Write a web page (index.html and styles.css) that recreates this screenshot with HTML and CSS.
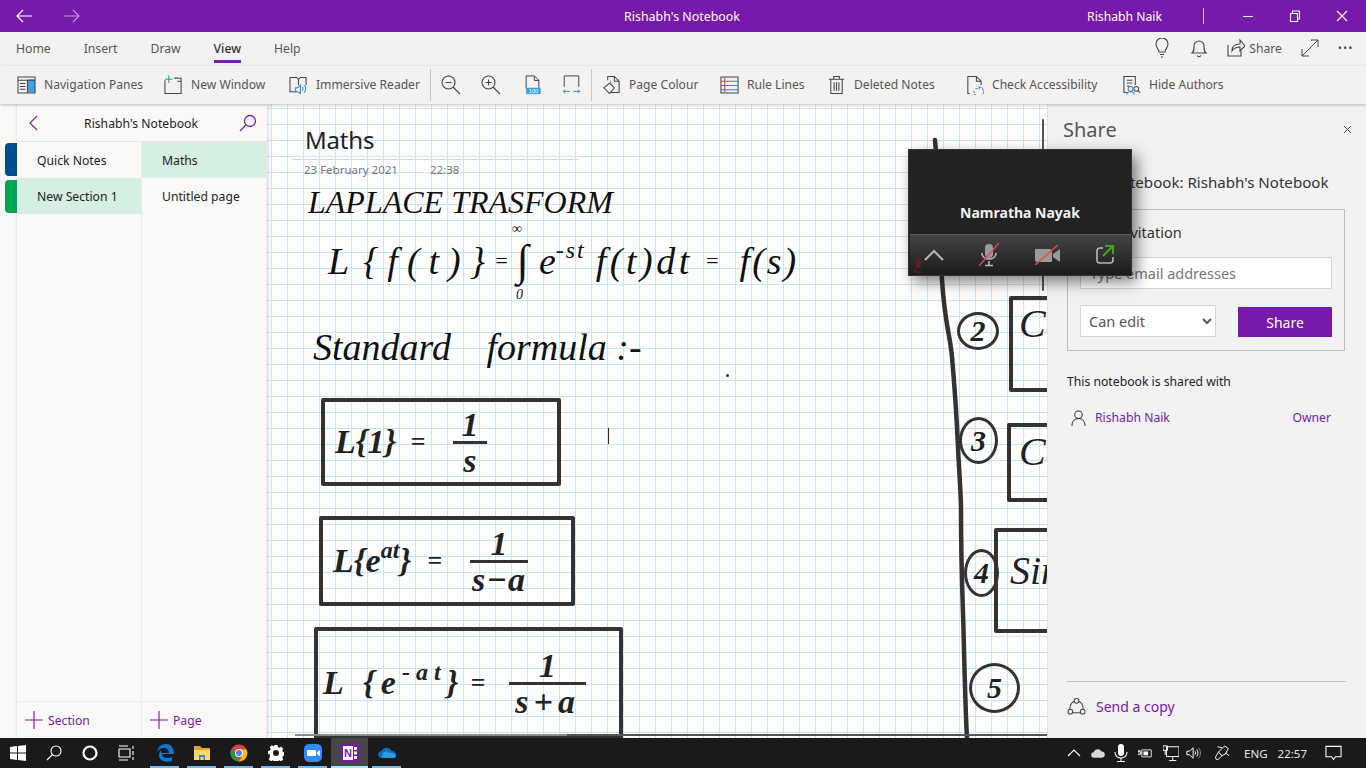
FILE: index.html
```html
<!DOCTYPE html>
<html lang="en">
<head>
<meta charset="utf-8">
<title>Rishabh's Notebook - OneNote</title>
<link rel="stylesheet" href="styles.css">
</head>
<body>
<div class="app">
  <header class="titlebar">
    <div class="tb-nav">
      <svg class="tb-arrow" viewBox="0 0 16 14"><path d="M16 7H1M7 1 1 7l6 6"/></svg>
      <svg class="tb-arrow faded" viewBox="0 0 16 14"><path d="M0 7h15M9 1l6 6-6 6"/></svg>
    </div>
    <div class="tb-title">Rishabh's Notebook</div>
    <div class="tb-user">Rishabh Naik</div>
    <div class="tb-sep"></div>
    <div class="tb-win">
      <svg viewBox="0 0 12 12"><path d="M1 6.5h10"/></svg>
      <svg viewBox="0 0 12 12"><path d="M1.5 3.5h7v8h-7zM3.5 3.5V1h7v8H8.500"/></svg>
      <svg viewBox="0 0 12 12"><path d="m1 1 10 10M11 1 1 11"/></svg>
    </div>
  </header>

  <nav class="tabs">
    <span class="tab">Home</span>
    <span class="tab">Insert</span>
    <span class="tab">Draw</span>
    <span class="tab active">View</span>
    <span class="tab">Help</span>
    <div class="tabs-right">
      <svg class="ic-tab" viewBox="0 0 18 20"><path d="M6 14c0-3-3-4-3-8a6 6 0 0 1 12 0c0 4-3 5-3 8zM7 16.500h4M8 19h2"/></svg>
      <svg class="ic-tab" viewBox="0 0 18 20"><path d="M2 15c2-2 2-3 2-7a5 5 0 0 1 10 0c0 4 0 5 2 7zM7 17.500c1 1.500 3 1.500 4 0"/></svg>
      <span class="share-link">
        <svg class="ic-tab" viewBox="0 0 18 20"><path d="M1 7v11h13v-5M5 13c0-5 3-7 8-7V2l5 6-5 5V9c-4 0-6 1-8 4z"/></svg>
        Share
      </span>
      <svg class="ic-tab" viewBox="0 0 18 20"><path d="m1 18 16-16M10 2h7v7M1 11v7h7" class="expand"/></svg>
      <span class="dots">•••</span>
    </div>
  </nav>

  <div class="toolbar">
    <div class="tool w1"><svg class="ic" viewBox="0 0 20 20"><path class="fill-blue" d="M11 4h8v14h-8z"/><path d="M1 1.500h18v17H1zM1 5h18M11 5v13M3 8.500h6M3 11.500h6M3 14.500h6"/></svg><span>Navigation Panes</span></div>
    <div class="tool w2"><svg class="ic" viewBox="0 0 20 20"><path d="M1 5v14h17V3h-7M14 6h4"/><path class="st-green" d="M5 0v8M1 4h8M11 2.500h3"/></svg><span>New Window</span></div>
    <div class="tool w3"><svg class="ic" viewBox="0 0 20 20"><path d="M8 17H1V2h7l2 2 2-2h6v8M10 4v6"/><path class="st-blue" d="M7 13v4h2l3 2v-9l-3 3zM14 12c1 1 1 3 0 4M16 10c2 2 2 6 0 8"/></svg><span>Immersive Reader</span></div>
    <div class="vsep"></div>
    <div class="tool z1"><svg class="ic-lg" viewBox="0 0 20 20"><circle cx="7.500" cy="7.500" r="6.500"/><path d="M4.500 7.500h6M12 12l7 7"/></svg></div>
    <div class="tool z2"><svg class="ic-lg" viewBox="0 0 20 20"><circle cx="7.500" cy="7.500" r="6.500"/><path d="M4.500 7.500h6M7.500 4.500v6M12 12l7 7"/></svg></div>
    <div class="tool z3"><svg class="ic" viewBox="0 0 20 22"><path d="M3 15V1h9l5 5v8M12 1v5h5"/><path class="fill-blue" d="M3 14h16v7H3z"/><text class="mini" x="11" y="20" text-anchor="middle">100</text></svg></div>
    <div class="tool z4"><svg class="ic" viewBox="0 0 20 22"><path d="M2 13V1h16v12"/><path class="st-blue" d="M1 18h7M3 16l-2 2 2 2M12 18h7M17 16l2 2-2 2"/></svg></div>
    <div class="vsep"></div>
    <div class="tool w4"><svg class="ic" viewBox="0 0 20 20"><path d="M6 5V1h7l5 5v12H8M13 1v5h5M8 8l5 5-5 6-6-6z"/><path class="st-blue" d="M9 6v4"/></svg><span>Page Colour</span></div>
    <div class="tool w5"><svg class="ic" viewBox="0 0 20 20"><path d="M1 1.500h18v17H1z"/><path class="st-blue" d="M1 6h18M1 10.500h18M1 15h18"/><path class="st-red" d="M5 2v16"/></svg><span>Rule Lines</span></div>
    <div class="tool w6"><svg class="ic" viewBox="0 0 20 20"><path d="M4 4v15h12V4M2 4h16M7 4V1h6v3M7.500 7v9M10 7v9M12.500 7v9"/></svg><span>Deleted Notes</span></div>
    <div class="tool w7"><svg class="ic" viewBox="0 0 20 20"><path d="M5 19H3V1h9l5 5v4M12 1v5h5"/><path class="st-blue dashed" d="M15 12a5 5 0 1 1-5 3M11 14h4V11"/></svg><span>Check Accessibility</span></div>
    <div class="tool"><svg class="ic" viewBox="0 0 20 20"><path d="M5 18H2V1h12v9M5 5h6M5 8h6M5 11h3"/><circle cx="15" cy="14" r="2.500"/><path d="m17 16 2 2"/><circle class="st-blue" cx="9" cy="14" r="2.500"/><path class="st-blue" d="M5 20c0-4 8-4 8 0"/></svg><span>Hide Authors</span></div>
  </div>

  <main class="main">
    <div class="rail">
      <div class="rail-tab blue"></div>
      <div class="rail-tab green"></div>
    </div>
    <aside class="nav">
      <div class="nav-head">
        <svg class="nav-back" viewBox="0 0 10 16"><path d="M8 1 1 8l7 7"/></svg>
        <span class="nav-title">Rishabh's Notebook</span>
        <svg class="nav-search" viewBox="0 0 18 18"><circle cx="11" cy="7" r="5.500"/><path d="M7 11l-6 6"/></svg>
      </div>
      <div class="nav-cols">
        <div class="nav-col">
          <div class="nav-item">Quick Notes</div>
          <div class="nav-item sel">New Section 1</div>
          <div class="nav-foot"><svg class="plus" viewBox="0 0 18 18"><path d="M9 0v18M0 9h18"/></svg>Section</div>
        </div>
        <div class="nav-col">
          <div class="nav-item sel">Maths</div>
          <div class="nav-item">Untitled page</div>
          <div class="nav-foot"><svg class="plus" viewBox="0 0 18 18"><path d="M9 0v18M0 9h18"/></svg>Page</div>
        </div>
      </div>
    </aside>

    <section class="canvas">
      <div class="page-head">
        <h1 class="page-title">Maths</h1>
        <div class="page-meta"><span>23 February 2021</span><span>22:38</span></div>
      </div>

      <div class="ink ink-title">LAPLACE TRASFORM</div>
      <div class="ink ink-formula">
        <span>L</span><span class="f1">{f(t)}</span><span class="f2">=</span><span class="f3">∫</span><span class="f4">e<sup>-st</sup></span><span class="f5">f(t)dt</span><span class="f2 f2b">=</span><span class="f6">f(s)</span>
        <span class="lim lim-top">∞</span><span class="lim lim-bot">0</span>
      </div>
      <div class="ink ink-std">Standard <span class="f7">formula :-</span></div>
      <div class="ink-dot"></div>
      <div class="caret"></div>

      <div class="ibox b1">
        <span class="ink-b">L{1}</span><span class="ink-b eq">=</span>
        <span class="frac"><span>1</span><span class="den">s</span></span>
      </div>
      <div class="ibox b2">
        <span class="ink-b">L{e<sup>at</sup>}</span><span class="ink-b eq">=</span>
        <span class="frac"><span>1</span><span class="den">s−a</span></span>
      </div>
      <div class="ibox b3">
        <span class="ink-b">L {e<sup>-at</sup>}</span><span class="ink-b eq">=</span>
        <span class="frac"><span>1</span><span class="den">s+a</span></span>
      </div>

      <svg class="ink-lines" viewBox="0 0 780 634">
        <path d="M668 36C672 80 672 130 675 176S683 230 685 253 690 320 691 343 694 390 694 406 695 480 696 509 698 600 700 634"/>
        <path class="thin" d="M776 16v170"/>
      </svg>

      <div class="num n2">2</div>
      <div class="num n3">3</div>
      <div class="num n4">4</div>
      <div class="num n5">5</div>
      <div class="ibox r2"><span class="ink-b">Co</span></div>
      <div class="ibox r3"><span class="ink-b">Co</span></div>
      <div class="ibox r4"><span class="ink-b">Sin</span></div>

      <div class="hscroll"></div>
    </section>

    <aside class="share">
      <div class="share-head">
        <h2>Share</h2>
        <svg class="share-x" viewBox="0 0 10 10"><path d="m1 1 8 8M9 1 1 9"/></svg>
      </div>
      <div class="share-nb">Share notebook: Rishabh's Notebook</div>
      <div class="invite">
        <div class="invite-title">Send invitation</div>
        <input class="email" type="text" placeholder="Type email addresses">
        <div class="invite-row">
          <select class="perm"><option>Can edit</option></select>
          <button class="send" type="button">Share</button>
        </div>
      </div>
      <div class="shared-label">This notebook is shared with</div>
      <div class="shared-row">
        <svg class="person" viewBox="0 0 16 18"><circle cx="8" cy="5" r="4"/><path d="M1 17c0-5 3-8 7-8s7 3 7 8"/></svg>
        <span class="shared-name">Rishabh Naik</span>
        <span class="shared-role">Owner</span>
      </div>
      <div class="share-foot">
        <svg class="copy" viewBox="0 0 20 20"><circle cx="10" cy="4" r="2.500"/><circle cx="3.500" cy="15.500" r="2.500"/><circle cx="16.500" cy="15.500" r="2.500"/><path d="M7.500 4.500C4.500 6 3 9 3 13M12.500 4.500C15.500 6 17 9 17 13M6 16.500h8"/></svg>
        <span>Send a copy</span>
      </div>
    </aside>
  </main>

  <footer class="taskbar">
    <div class="tk"><svg class="tk-ic" viewBox="0 0 16 16"><path class="w" d="m0 2 7-1v6.500H0zM8 .9 16 0v7.500H8zM0 8.500h7V15l-7-1zM8 8.500h8V16l-8-1.100z"/></svg></div>
    <div class="tk"><svg class="tk-ic" viewBox="0 0 16 16"><circle class="ws" cx="10" cy="6" r="5"/><path class="ws" d="M6.500 9.500 1 15"/></svg></div>
    <div class="tk"><svg class="tk-ic" viewBox="0 0 16 16"><circle class="ws thick" cx="8" cy="8" r="6.500"/></svg></div>
    <div class="tk tk-view"><svg class="tk-ic" viewBox="0 0 16 16"><path class="ws" d="M1 1h9M1 15h9M1 4h11v8H1zM15 1v3M15 6v4M15 12v3"/></svg></div>
    <div class="tk run"><svg class="tk-ic big" viewBox="0 0 18 18"><path class="edge" d="M1 8C2 3 5 0 10 0c5 0 8 4 8 10H6c0 4 6 5 10 3v4c-6 2-13 0-13-6 0-2 1-4 3-5 0 0-1 1-1 3h8c0-3-2-5-5-5C5 4 3 5 1 8z"/></svg></div>
    <div class="tk run"><svg class="tk-ic big" viewBox="0 0 18 18"><path class="f-dark" d="M1 2h6l2 2h8v3H1z"/><path class="f-light" d="M1 6h16v10H1z"/><path class="f-blue" d="M6 11h6v5h-1.500v-3h-3v3H6z"/></svg></div>
    <div class="tk run"><svg class="tk-ic big" viewBox="0 0 18 18"><circle class="c-red" cx="9" cy="9" r="8.500"/><path class="c-green" d="M1.600 4.500 5 11l3 5.500 1 1C4 17.500.5 13.500.5 9c0-1.600.4-3.200 1.100-4.500z"/><path class="c-yellow" d="M9 5.500h7.500C17.500 8 18 12 15 15c-1.500 1.500-3.500 2.500-6 2.500L12 12z"/><circle class="c-white" cx="9" cy="9" r="4"/><circle class="c-blue" cx="9" cy="9" r="3"/></svg></div>
    <div class="tk run"><svg class="tk-ic" viewBox="0 0 16 16"><path class="w" fill-rule="evenodd" d="M6.500 0h3l.5 2 1.500.7 1.800-1 2 2-1 1.800.7 1.500 2 .5v3l-2 .5-.7 1.500 1 1.800-2 2-1.800-1-1.500.7-.5 2h-3l-.5-2-1.500-.7-1.800 1-2-2 1-1.800L2 9.500 0 9V6l2-.5.700-1.500-1-1.800 2-2 1.800 1L6 .7zM8 5a3 3 0 1 0 0 6 3 3 0 0 0 0-6z"/></svg></div>
    <div class="tk run"><svg class="tk-ic big" viewBox="0 0 18 18"><rect class="z-bg" width="18" height="18" rx="5"/><path class="w" d="M3 6h8a1 1 0 0 1 1 1v5H4a1 1 0 0 1-1-1zM13 8l3-2v6l-3-2z"/></svg></div>
    <div class="tk current"><svg class="tk-ic big" viewBox="0 0 18 18"><path class="on-bg" d="M0 0h18v18H0z"/><path class="on-w" d="M2 2h10v14H2z"/><text class="on-n" x="7" y="13" text-anchor="middle">N</text><path class="on-w" d="M13 3h3v3h-3zM13 7.500h3v3h-3zM13 12h3v3h-3z"/></svg></div>
    <div class="tk run"><svg class="tk-ic big" viewBox="0 0 18 12"><path class="od1" d="M4 11a3.500 3.500 0 0 1-.5-7A5.500 5.500 0 0 1 13.500 4a4 4 0 0 1 4.500 4 3.500 3.500 0 0 1-3.500 3z"/><path class="od2" d="M6 11c-2 0-3-3-1-5s5-2 6 0c3-1 7 1 7 3 0 1-1 2-3 2z"/></svg></div>

    <div class="tray">
      <svg class="tr-ic" viewBox="0 0 14 14"><path class="ws" d="m1 10 6-6 6 6"/></svg>
      <svg class="tr-ic tr-cloud" viewBox="0 0 18 14"><path class="cloud" d="M4 13a3.500 3.500 0 0 1-.5-7A5.500 5.500 0 0 1 13.500 5a4 4 0 0 1 .5 8z"/></svg>
      <svg class="tr-ic" viewBox="0 0 14 18"><rect class="w" x="4" y="0" width="6" height="12" rx="3"/><path class="ws" d="M1 8c0 8 12 8 12 0M7 14v3M3 17.500h8"/></svg>
      <svg class="tr-ic tr-power" viewBox="0 0 18 14"><path class="ws" d="M5 3h12v9H5z"/><path class="w" d="M7 5h6v5H7z"/><path class="ws" d="M5 7H2M0 5h3v4H0zM1 3v2M2.500 3v2"/></svg>
      <svg class="tr-ic wide tr-net" viewBox="0 0 18 18"><path class="ws" d="M4 2h14v11H4zM11 13v4M7 17.500h8M0 1h5v5H0zM2.500 6v5"/></svg>
      <svg class="tr-ic wide" viewBox="0 0 18 14"><path class="ws" d="M1 5v4h3l4 4V1L4 5zM10 5c1 1 1 3 0 4M12 3c2 2 2 6 0 8"/><path class="ws dim" d="M14 1c3 3 3 9 0 12"/></svg>
      <svg class="tr-ic pen" viewBox="0 0 18 18"><path class="ws" d="M9 12 5 8l7-7 4 3-3 6zM5 8 2 13c-1 3 1 4 3 3l4-4M9 3l-5-1M13 9l4 3"/></svg>
      <span class="tr-text eng">ENG</span>
      <span class="tr-text clock">22:57</span>
      <svg class="tr-note" viewBox="0 0 18 16"><path class="ws" d="M1 1h16v11h-6l-2 3-2-3H1z"/></svg>
    </div>
  </footer>

  <div class="meeting">
    <div class="meeting-name">Namratha Nayak</div>
    <div class="meeting-bar">
      <svg class="m-mini" viewBox="0 0 12 14"><path class="m-red" d="M5 0h3v8H5zM1 13 11 2M2 13h8"/></svg>
      <svg class="m-ic" viewBox="0 0 20 14"><path class="m-gray thick" d="m1 12 9-9 9 9"/></svg>
      <svg class="m-ic" viewBox="0 0 20 24"><rect class="m-fill" x="6" y="1" width="8" height="14" rx="4"/><path class="m-gray" d="M3 10c0 8 14 8 14 0M10 18v4M6 22.500h8"/><path class="m-slash" d="M0 23 20 0"/></svg>
      <svg class="m-ic big" viewBox="0 0 26 20"><path class="m-fill" d="M1 4h15a2 2 0 0 1 2 2v11H3a2 2 0 0 1-2-2zM19 9l7-5v13l-7-5z"/><path class="m-slash" d="M1 20 24 0"/></svg>
      <svg class="m-ic" viewBox="0 0 20 20"><path class="m-gray" d="M8 3H5a3 3 0 0 0-3 3v9a3 3 0 0 0 3 3h10a3 3 0 0 0 3-3v-3"/><path class="m-green" d="m8 11 9-9M10 1h8v8"/></svg>
    </div>
  </div>
</div>
</body>
</html>
```
FILE: styles.css
```css
* { box-sizing: border-box; }
html, body { margin: 0; height: 100%; overflow: hidden; }
body { font-family: "Noto Sans", "Open Sans", sans-serif; font-size: 12.2px; color: #444; }
svg { fill: none; stroke: #444; stroke-width: 1.1; flex: none; display: block; }

.app { position: relative; width: 1366px; height: 768px; display: flex; flex-direction: column; background: #f3f2f1; }

/* Title bar */
.titlebar { height: 32px; background: #7719aa; color: #fff; display: flex; align-items: center; position: relative; flex: none; }
.tb-nav { display: flex; gap: 32px; padding-left: 16px; }
.tb-arrow { width: 16px; height: 14px; stroke: #fff; stroke-width: 1.2; }
.tb-arrow.faded { opacity: .55; }
.tb-title { position: absolute; left: 0; right: 2px; text-align: center; font-size: 12.4px; pointer-events: none; }
.tb-user { margin-left: auto; font-size: 12.2px; }
.tb-sep { width: 1px; height: 16px; background: #d9c2e6; margin: 0 38px 0 41px; }
.tb-win { display: flex; gap: 35px; padding-right: 18px; }
.tb-win svg { width: 12px; height: 12px; stroke: #fff; }

/* Tabs */
.tabs { height: 34px; flex: none; display: flex; align-items: center; padding-left: 16px; }
.tab { position: relative; margin-right: 33px; height: 100%; display: flex; align-items: center; color: #555; padding-bottom: 2px; }
.tab.active { color: #333; font-weight: 500; }
.tab.active::after { content: ""; position: absolute; left: 0; right: 0; bottom: 3px; height: 3px; background: #7719aa; }
.tabs-right { margin-left: auto; display: flex; align-items: center; padding: 0 12px 2px 0; gap: 19px; }
.ic-tab { width: 18px; height: 20px; }
.ic-tab .expand { stroke-width: 1; }
.share-link { display: flex; align-items: center; gap: 4px; color: #555; }
.dots { font-size: 10px; width: 16px; letter-spacing: 1.500px; color: #444; white-space: nowrap; }

/* Toolbar */
.toolbar { height: 38px; flex: none; display: flex; align-items: center; padding: 0 0 1px 17px; position: relative; z-index: 3; box-shadow: 0 1px 3px rgba(0,0,0,.25); background: #f3f2f1; }
.tool { display: flex; align-items: center; gap: 8px; color: #555; white-space: nowrap; flex: none; font-size: 12.100px; }
.w1 { width: 147px; }
.w2 { width: 125px; }
.w3 { width: 141px; }
.w4 { width: 118px; }
.w5 { width: 107px; }
.w6 { width: 138px; }
.w7 { width: 157px; }
.z1 { width: 40px; }
.z2 { width: 42px; }
.z3 { width: 39px; }
.z4 { width: 29px; }
.ic { width: 19px; height: 20px; }
.ic-lg { width: 20px; height: 20px; }
.vsep { width: 1px; height: 32px; background: #c8c6c4; margin-right: 10px; flex: none; }
.fill-blue { fill: #3f9fe0; stroke: none; }
.st-blue { stroke: #2b88d8; }
.st-green { stroke: #1eb25c; }
.st-red { stroke: #e23a3a; }
.dashed { stroke-dasharray: 2.5 1; }
.mini { font-size: 6px; font-family: "Liberation Sans", sans-serif; fill: #fff; stroke: none; }

/* Main */
.main { flex: 1; min-height: 0; display: flex; position: relative; }
.rail { width: 17px; flex: none; background: #faf9f8; padding: 39px 0 0 5px; display: flex; flex-direction: column; gap: 4px; box-shadow: inset -2px 0 3px -2px rgba(0,0,0,.15); }
.rail-tab { height: 33px; border-radius: 4px 0 0 4px; }
.rail-tab.blue { background: #004e8c; }
.rail-tab.green { background: #00a651; }

.nav { width: 250px; flex: none; background: #faf9f8; display: flex; flex-direction: column; box-shadow: 2px 0 3px rgba(0,0,0,.12); position: relative; z-index: 1; }
.nav-head { height: 38px; display: flex; align-items: center; border-bottom: 1px solid #e8e6e4; padding: 1px 10px 0 12px; flex: none; color: #222; }
.nav-back { width: 10px; height: 16px; stroke: #7719aa; }
.nav-title { flex: 1; text-align: center; padding-left: 4px; }
.nav-search { width: 18px; height: 18px; stroke: #7719aa; stroke-width: 1.3; }
.nav-cols { flex: 1; min-height: 0; display: flex; }
.nav-col { width: 125px; display: flex; flex-direction: column; border-right: 1px solid #eeecea; }
.nav-item { height: 36px; flex: none; display: flex; align-items: center; padding-left: 20px; color: #222; }
.nav-item.sel { background: #d5efe0; }
.nav-foot { margin-top: auto; height: 37px; border-top: 1px solid #eeecea; display: flex; align-items: center; gap: 5px; padding-left: 8px; color: #7719aa; }
.plus { width: 18px; height: 18px; stroke: #7719aa; }

/* Canvas */
.canvas { flex: 1; min-width: 0; position: relative; overflow: hidden; background-color: #fff;
  background-image: linear-gradient(to right, #c6e6f8 1px, transparent 1px), linear-gradient(to bottom, #c6e6f8 1px, transparent 1px);
  background-size: 16px 16px; background-position: 4px 4px; }
.page-head { position: absolute; left: 25px; top: 20px; width: 287px; }
.page-title { margin: 0 0 0 13px; font-size: 24px; font-weight: 400; color: #222; line-height: 32px; letter-spacing: -.2px; }
.page-meta { border-top: 1px solid #d8d8d8; margin-top: 3px; padding: 2px 0 0 12px; font-size: 11.5px; color: #777; display: flex; gap: 32px; }

.ink { position: absolute; font-family: "Liberation Serif", serif; font-style: italic; color: #111; white-space: nowrap; }
.ink-title { left: 41px; top: 80px; font-size: 32px; }
.ink-formula { left: 61px; top: 132px; font-size: 38px; display: flex; align-items: center; line-height: 50px; }
.ink-formula sup { font-size: 24px; line-height: 0; vertical-align: 16px; letter-spacing: 2px; }
.f1 { margin-left: 14px; letter-spacing: 9px; }
.f2 { margin: 0 8px 0 0; font-size: 22px; }
.f3 { font-size: 44px; line-height: 50px; margin-right: 10px; }
.f5 { margin-left: 10px; letter-spacing: 3.500px; }
.f2b { margin: 0 20px 0 12px; }
.f6 { letter-spacing: 2px; }
.lim { position: absolute; font-size: 14px; line-height: 14px; }
.lim-top { left: 184px; top: -14px; }
.lim-bot { left: 188px; top: 52px; }
.ink-std { left: 46px; top: 218px; font-size: 38px; line-height: 50px; }
.f7 { margin-left: 26px; }
.ink-dot { position: absolute; left: 459px; top: 270px; width: 3px; height: 3px; border-radius: 50%; background: #333; }
.caret { position: absolute; left: 341px; top: 324px; width: 1px; height: 16px; background: #4a1a10; }

.ibox { position: absolute; border: 4px solid #333; border-radius: 2px; display: flex; align-items: center; overflow: hidden; }
.ink-b { font-family: "Liberation Serif", serif; font-style: italic; font-weight: 700; color: #222; font-size: 34px; white-space: nowrap; line-height: 1; }
.ink-b sup { font-size: 24px; line-height: 0; vertical-align: 14px; }
.eq { margin-left: 14px; font-size: 26px; }
.frac { display: flex; flex-direction: column; align-items: center; font-family: "Liberation Serif", serif; font-style: italic; font-weight: 700; font-size: 34px; color: #222; line-height: 33px; }
.den { border-top: 3px solid #333; padding: 0 10px; }
.b1 { left: 54px; top: 294px; width: 240px; height: 88px; padding-left: 10px; }
.b1 .frac { margin-left: 28px; }
.b2 { left: 52px; top: 412px; width: 256px; height: 90px; padding-left: 10px; }
.b2 .eq { margin-left: 16px; }
.b2 .den { padding: 0 2px; letter-spacing: 1px; }
.b2 .frac { margin-left: 28px; }
.b3 { left: 47px; top: 523px; width: 309px; height: 112px; padding-left: 5px; }
.b3 .ink-b:first-child { letter-spacing: 6px; }
.b3 .eq { margin-left: 6px; }
.b3 .den { padding: 0 6px; letter-spacing: 5px; }
.b3 .frac { margin-left: 24px; }
.r2 { left: 742px; top: 192px; width: 50px; height: 96px; padding: 0 0 40px 6px; }
.r3 { left: 740px; top: 319px; width: 50px; height: 79px; padding: 0 0 22px 8px; }
.r4 { left: 727px; top: 424px; width: 80px; height: 105px; padding: 0 0 20px 12px; }
.r2 .ink-b, .r3 .ink-b, .r4 .ink-b { font-weight: 400; font-size: 40px; }

.ink-lines { position: absolute; inset: 0; width: 780px; height: 634px; stroke: #333; stroke-width: 4.500; stroke-linecap: round; }
.ink-lines .thin { stroke: #555; stroke-width: 2; }
.num { position: absolute; border: 3.500px solid #333; border-radius: 50%; display: flex; align-items: center; justify-content: center; font-family: "Liberation Serif", serif; font-style: italic; color: #222; font-size: 30px; font-weight: 700; }
.n2 { left: 690px; top: 208px; width: 42px; height: 38px; }
.n3 { left: 692px; top: 313px; width: 39px; height: 47px; }
.n4 { left: 697px; top: 445px; width: 35px; height: 48px; }
.n5 { left: 702px; top: 559px; width: 51px; height: 50px; }
.hscroll { position: absolute; left: 28px; right: 0; bottom: 2px; height: 2px; background: linear-gradient(to right, #8a8a8a 272px, #555 272px); }

/* Share panel */
.share { width: 319px; flex: none; background: #f2f2f2; border-left: 1px solid #e4e4e4; padding: 0 20px 0 19px; display: flex; flex-direction: column; color: #333; position: relative; z-index: 1; }
.share-head { display: flex; align-items: center; justify-content: space-between; height: 50px; margin-left: -4px; }
.share-head h2 { margin: 0; font-size: 20px; font-weight: 400; color: #555; }
.share-x { width: 9px; height: 9px; margin-right: -6px; stroke: #444; }
.share-nb { font-size: 15.100px; margin-top: 17px; line-height: 22px; color: #333; white-space: nowrap; }
.invite { margin-top: 16px; width: 278px; height: 142px; border: 1px solid #bcbcbc; padding: 12px 12px 0; display: flex; flex-direction: column; }
.invite-title { font-size: 14.5px; line-height: 20px; }
.email { margin-top: 15px; width: 252px; height: 32px; border: 1px solid #d4d4d4; background: #fff; padding: 0 9px; font: 14.5px "Noto Sans", sans-serif; }
.email::placeholder { color: #777; }
.invite-row { display: flex; justify-content: space-between; align-items: flex-end; margin-top: 16px; width: 252px; }
.perm { width: 136px; height: 32px; border: 1px solid #d4d4d4; background-color: #fff; font: 14.5px "Noto Sans", sans-serif; color: #555; padding-left: 4px; }
.send { width: 94px; height: 30px; border: 0; background: #7719aa; color: #fff; font: 14px "Noto Sans", sans-serif; }
.shared-label { margin-top: 22px; color: #222; line-height: 17px; }
.shared-row { display: flex; align-items: center; margin-top: 18px; padding: 0 15px 0 4px; color: #7719aa; line-height: 20px; }
.person { width: 15px; height: 17px; margin-right: 9px; stroke: #333; }
.shared-role { margin-left: auto; }
.share-foot { margin-top: auto; height: 57px; border-top: 1px solid #c4c4c4; display: flex; align-items: flex-start; padding-top: 15px; gap: 10px; color: #7719aa; font-size: 14px; line-height: 20px; width: 279px; }
.copy { width: 19px; height: 19px; }

/* Taskbar */
.taskbar { height: 30px; flex: none; background: #1a1a1a; display: flex; position: relative; z-index: 5; color: #fff; }
.tk { width: 37px; height: 30px; display: flex; align-items: center; justify-content: center; position: relative; flex: none; }
.tk:nth-child(-n+3) { width: 36px; }
.tk.tk-view { width: 38px; padding-right: 3px; }
.tk.run::after { content: ""; position: absolute; left: 4px; right: 4px; bottom: 0; height: 2px; background: #76b9ed; }
.tk.current { background: #464646; }
.tk.current::after { content: ""; position: absolute; left: 0; right: 0; bottom: 0; height: 2px; background: #99ebff; }
.tk-ic { width: 16px; height: 16px; stroke: none; }
.tk-ic.big { width: 18px; height: 18px; }
.w { fill: #fff; stroke: none; }
.ws { fill: none; stroke: #fff; stroke-width: 1.1; }
.ws.thick { stroke-width: 2.200; }
.ws.dim { stroke: #888; }
.edge { fill: #0f78d4; stroke: none; }
.f-dark { fill: #e0a526; stroke: none; }
.f-light { fill: #fdd663; stroke: none; }
.f-blue { fill: #2b88d8; stroke: none; }
.c-red { fill: #db4437; stroke: none; }
.c-green { fill: #0f9d58; stroke: none; }
.c-yellow { fill: #fbbc05; stroke: none; }
.c-white { fill: #fff; stroke: none; }
.c-blue { fill: #4285f4; stroke: none; }
.z-bg { fill: #2d8cff; stroke: none; }
.on-bg { fill: #7719aa; stroke: none; }
.on-w { fill: #fff; stroke: none; }
.on-n { fill: #7719aa; stroke: none; font: 700 11px "Liberation Sans", sans-serif; }
.od1 { fill: #0f6cbd; stroke: none; }
.od2 { fill: #2b9be6; stroke: none; }
.cloud { fill: #d8d8d8; stroke: none; }

.tray { margin-left: auto; display: flex; align-items: center; padding-right: 24px; }
.tr-ic { width: 14px; height: 18px; margin-right: 10px; }
.tr-ic.tr-cloud { margin-right: 9px; }
.tr-ic.tr-power { margin-right: 11px; }
.tr-ic.wide { width: 16px; }
.tr-ic.tr-net { margin-right: 7px; }
.tr-ic.pen { width: 16px; margin-left: 2px; margin-right: 14px; }
.tr-text { font-size: 11.500px; color: #e8e8e8; white-space: nowrap; }
.eng { margin-right: 10px; }
.clock { margin-right: 18px; }
.tr-note { width: 17px; height: 16px; }

/* Floating meeting window */
.meeting { position: absolute; left: 908px; top: 149px; width: 224px; height: 127px; background: #222; z-index: 10; box-shadow: 5px 6px 14px rgba(0,0,0,.5); border: 1px solid #333; display: flex; flex-direction: column; }
.meeting-name { flex: 1; display: flex; align-items: flex-end; justify-content: center; padding-bottom: 12px; font: 700 14px "Noto Sans", sans-serif; color: #f0f0f0; }
.meeting-bar { position: relative; height: 41px; flex: none; margin-left: 1px; border-top: 1px solid #5c5c5c; background: linear-gradient(#444, #1b1b1b); display: flex; align-items: center; justify-content: space-between; padding: 0 16px 0 14px; }
.m-ic { width: 20px; height: 24px; }
.m-ic.big { width: 26px; height: 20px; }
.m-mini { position: absolute; left: 2px; bottom: 2px; width: 12px; height: 14px; }
.m-red { fill: #5a2020; stroke: #6a2020; }
.m-gray { stroke: #b8b8b8; stroke-width: 1.600; fill: none; }
.m-gray.thick { stroke-width: 2; }
.m-fill { fill: #9a9a9a; stroke: none; }
.m-slash { stroke: #e8484d; stroke-width: 1.400; }
.m-green { stroke: #3da81c; stroke-width: 2; fill: none; }
```
